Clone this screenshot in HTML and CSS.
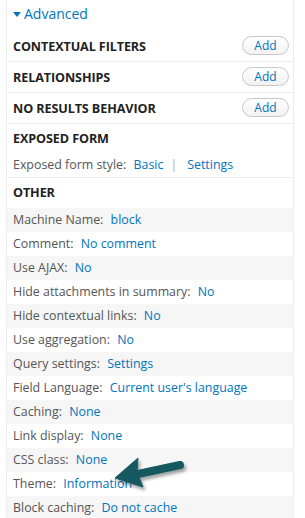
FILE: index.html
```html
<!DOCTYPE html>
<html lang="en">
<head>
    <meta charset="UTF-8" />
    <title>Advanced</title>
    <link rel="stylesheet" href="styles.css">
</head>
<body>

<div class="panel">
    <div class="toggle"><span class="caret"></span>Advanced</div>

    <div class="bar">
        <h3>Contextual filters</h3>
        <button class="add">Add</button>
    </div>
    <div class="bar">
        <h3>Relationships</h3>
        <button class="add">Add</button>
    </div>
    <div class="bar">
        <h3>No results behavior</h3>
        <button class="add">Add</button>
    </div>

    <div class="block">
        <h3 class="title">Exposed form</h3>
        <div class="line">Exposed form style: <a href="#">Basic</a><span class="sep">|</span><a href="#">Settings</a></div>
    </div>

    <div class="other">
        <h3 class="title">Other</h3>
        <div class="row odd">Machine Name: <a href="#">block</a></div>
        <div class="row">Comment: <a href="#">No comment</a></div>
        <div class="row odd">Use AJAX: <a href="#">No</a></div>
        <div class="row">Hide attachments in summary: <a href="#">No</a></div>
        <div class="row odd">Hide contextual links: <a href="#">No</a></div>
        <div class="row">Use aggregation: <a href="#">No</a></div>
        <div class="row odd">Query settings: <a href="#">Settings</a></div>
        <div class="row">Field Language: <a href="#">Current user's language</a></div>
        <div class="row odd">Caching: <a href="#">None</a></div>
        <div class="row">Link display: <a href="#">None</a></div>
        <div class="row odd">CSS class: <a href="#">None</a></div>
        <div class="row">Theme: <a href="#">Information</a></div>
        <div class="row odd">Block caching: <a href="#">Do not cache</a></div>
    </div>
</div>

<!-- pointer arrow drawn over the Theme row -->
<svg class="arrow" width="90" height="50" viewBox="0 0 90 50">
    <defs>
        <filter id="sh" x="-20%" y="-20%" width="140%" height="150%">
            <feDropShadow dx="2" dy="3" stdDeviation="1.6" flood-color="#000" flood-opacity="0.35"/>
        </filter>
    </defs>
    <g filter="url(#sh)" fill="#14595f" stroke="#14595f">
        <line x1="70" y1="18" x2="28" y2="27" stroke-width="8" stroke-linecap="round"/>
        <polygon points="5,31 28,11 27,25 33,40" stroke-width="1" stroke-linejoin="round"/>
    </g>
</svg>

</body>
</html>
```

FILE: styles.css
```css
body {
    margin: 0;
    font-family: "Open Sans", Arial, sans-serif;
    font-size: 12.4px;
    color: #555;
    background: #fff;
}
a {
    color: #0074bd;
    text-decoration: none;
    margin-left: 4px;
}
.panel {
    margin-left: 6px;
    width: 286px;
    border-left: 1px solid #ececec;
    border-right: 1px solid #ececec;
    min-height: 518px;
}
.toggle {
    height: 31px;
    line-height: 28px;
    padding-left: 6px;
    color: #0074bd;
    font-size: 14px;
}
.caret {
    display: inline-block;
    width: 0;
    height: 0;
    border-left: 4px solid transparent;
    border-right: 4px solid transparent;
    border-top: 5px solid #0074bd;
    margin-right: 3px;
    vertical-align: 2px;
}
h3 {
    margin: 0;
    font-size: 12.6px;
    font-weight: bold;
    text-transform: uppercase;
    color: #222;
    letter-spacing: -0.1px;
}
.bar {
    display: flex;
    align-items: center;
    justify-content: space-between;
    height: 30px;
    padding: 0 4px 0 6px;
    border-bottom: 1px solid #ececec;
}
.add {
    width: 47px;
    height: 19px;
    padding: 0 0 2px;
    margin-top: -2px;
    font-family: "Open Sans", Arial, sans-serif;
    font-size: 12px;
    color: #0074bd;
    background: linear-gradient(#fff, #f2f2f2);
    border: 1px solid #c8c8c8;
    border-radius: 10px;
}
.block {
    height: 53px;
    padding: 0 6px;
    border-bottom: 1px solid #ececec;
}
.title {
    height: 30px;
    line-height: 30px;
}
.line {
    line-height: 22px;
}
.sep {
    color: #aaa;
    margin: 0 6px 0 7px;
}
.other .title {
    padding-left: 6px;
}
.row {
    height: 24px;
    line-height: 24px;
    padding-left: 6px;
}
.row.odd {
    background: #f6f6f6;
}
.arrow {
    position: absolute;
    left: 110px;
    top: 447px;
}
```
